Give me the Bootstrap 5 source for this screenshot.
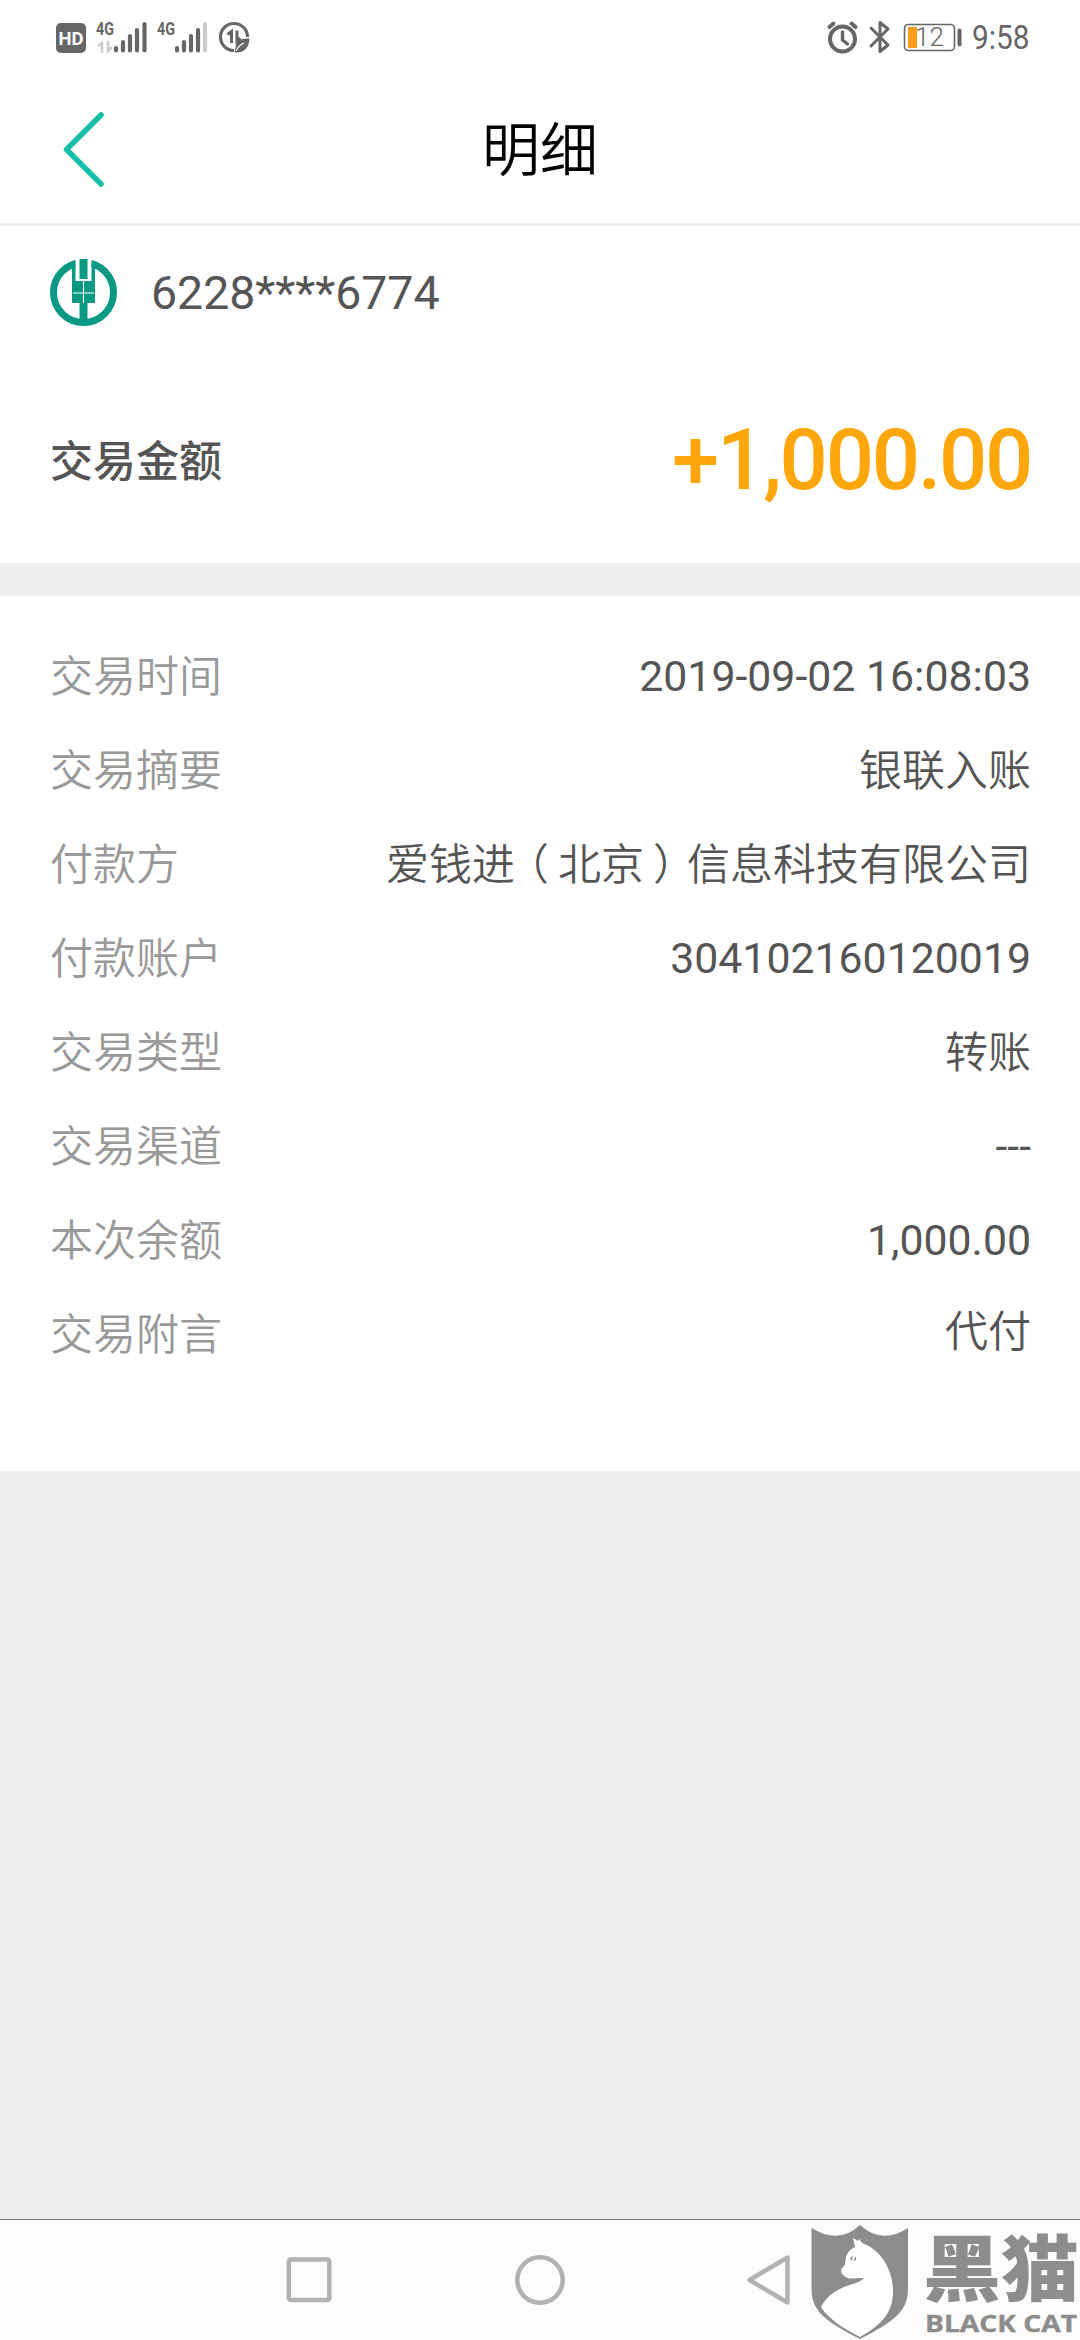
<!DOCTYPE html>
<html lang="zh-CN">

<head>
    <meta charset="UTF-8">
    <meta name="viewport" content="width=device-width, initial-scale=1.0">
    <title>明细</title>
    <link href="https://cdn.jsdelivr.net/npm/bootstrap@5.3.3/dist/css/bootstrap.min.css" rel="stylesheet">
    <style>
        body {
            height: 2340px;
            overflow: hidden;
            background-color: #efefef;
            color: #555;
            font-family: Roboto, "Noto Sans CJK SC", sans-serif;
            font-size: 43px;
            line-height: 1;
        }

        svg {
            display: block;
            flex: none;
        }

        /* 状态栏 */
        .status-bar {
            height: 75px;
            padding: 0 50px 0 55px;
        }

        .clock {
            font-size: 33.5px;
            color: #666;
            transform: scaleX(.89);
            transform-origin: right;
        }

        /* 标题栏 */
        .title-bar {
            height: 151px;
            padding: 0 62px;
            border-bottom: 3px solid #efefef;
        }

        .title-bar h1 {
            padding-top: 3px;
            font-size: 58px;
            font-weight: 350;
            line-height: 1;
            color: #000;
        }

        .side-box {
            width: 120px;
        }

        /* 卡号和金额 */
        .summary {
            height: 337px;
            padding: 33px 49px 0 50px;
        }

        .card-no {
            font-size: 46.4px;
            padding-left: 34px;
            padding-top: 2px;
        }

        .amount-row {
            height: 86px;
            margin-top: 91px;
        }

        .amount-label {
            font-weight: 500;
            padding-top: 5px;
        }

        .amount {
            font-size: 85px;
            font-weight: 500;
            letter-spacing: -2.3px;
            color: #ffa70a;
        }

        /* 明细列表 */
        .detail {
            margin-top: 33px;
            height: 875px;
            padding: 33px 49px 0 50px;
        }

        .detail-row {
            height: 94px;
        }

        .detail-row dt {
            padding-top: 3px;
            font-weight: 350;
            color: #999;
        }

        .detail-row dd {
            font-size: 42.8px;
        }

        .detail-row .zh {
            padding-top: 3px;
            font-size: 43px;
            font-weight: 350;
        }

        .detail-row:last-child .zh {
            padding-top: 0;
            padding-bottom: 3px;
        }

        /* 括号居中 */
        .paren-l,
        .paren-r {
            font-feature-settings: "halt";
            margin: 0 9px 0 12.5px;
        }

        .paren-r {
            margin: 0 12.5px 0 9px;
        }

        /* 导航栏 */
        .nav-keys {
            height: 121px;
            background-color: #fcfcfc;
            border-top: 1px solid #777;
            padding-left: 286px;
        }

        .nav-keys svg {
            overflow: visible;
        }
    </style>
</head>

<body class="d-flex flex-column">
    <header class="bg-white">
        <div class="status-bar d-flex align-items-center justify-content-between">
            <svg width="200" height="75" viewBox="55 0 200 75" fill="#666">
                <rect x="56" y="23" width="30" height="30" rx="5" />
                <text x="71" y="45" font-size="19" font-weight="700" text-anchor="middle" fill="#fff" textLength="25" lengthAdjust="spacingAndGlyphs">HD</text>
                <text x="96" y="35" font-size="18" font-weight="700" textLength="18" lengthAdjust="spacingAndGlyphs">4G</text>
                <path d="M98 46l4-3v10M108 41v10l4-4" fill="none" stroke="#ccc" stroke-width="2.5" />
                <path d="M116 48v2.500M123 42v8.500M130 36v14.500M137 30v20.500M144.500 24v26.500" stroke="#666" stroke-width="4.200" stroke-linecap="round" />
                <text x="157" y="35" font-size="18" font-weight="700" textLength="18" lengthAdjust="spacingAndGlyphs">4G</text>
                <path d="M177 48v2.500M184 42v8.500M191 36v14.500M198 30v20.500" stroke="#666" stroke-width="4.200" stroke-linecap="round" />
                <path d="M205 24v26.500" stroke="#ccc" stroke-width="4.200" stroke-linecap="round" />
                <path d="M247.500 37A13.500 13.500 0 1 0 234 50.500" fill="none" stroke="#666" stroke-width="3.200" />
                <path d="M227.500 34.500l4-3v11.500M237 30.500v11l3.500-3.500" fill="none" stroke="#666" stroke-width="3" />
                <path d="M249.500 38.500q-13-1-14 9l-1 5q14 1 15-14z" />
                <path d="M236 51q3-6 8-8" fill="none" stroke="#fff" stroke-width="1.200" />
            </svg>
            <div class="d-flex align-items-center">
                <svg width="140" height="75" viewBox="823 0 140 75" fill="none" stroke="#666" stroke-width="4">
                    <circle cx="840.500" cy="39" r="12.500" />
                    <path d="M840.500 32v8l5 4" stroke-width="3.400" stroke-linecap="round" />
                    <path d="M827.500 27l4-3.500M853.500 27l-4-3.500" stroke-linecap="round" />
                    <path d="M869 28l17 17-8 6.500V22.500l8 6.500-17 17" stroke-width="3" stroke-linejoin="round" stroke-linecap="round" />
                    <rect x="902.500" y="24.500" width="50" height="26" rx="4" stroke-width="1.600" />
                    <path d="M906 27h9v21h-9z" fill="#ff9b1a" stroke="none" />
                    <text x="913" y="46" font-size="26" font-weight="300" fill="#666" stroke="none">12</text>
                    <path d="M957.500 30.500v14" stroke-linecap="round" />
                </svg>
                <span class="clock">9:58</span>
            </div>
        </div>
        <div class="title-bar d-flex align-items-center justify-content-between">
            <div class="side-box">
                <svg width="45" height="76" viewBox="0 0 45 76" fill="none" stroke="#16bfa7" stroke-width="5.500" stroke-linecap="round" stroke-linejoin="round">
                    <path d="M39 4L4.500 38.500 39 73" />
                </svg>
            </div>
            <h1 class="m-0">明细</h1>
            <div class="side-box"></div>
        </div>
    </header>

    <main class="flex-grow-1">
        <section class="summary bg-white">
            <div class="d-flex align-items-center">
                <svg width="67" height="67" viewBox="0 0 67 67">
                    <circle cx="33.500" cy="33.500" r="30" fill="none" stroke="#0a9a84" stroke-width="7" />
                    <path d="M25.500 0h16v20h-16z" fill="#fff" />
                    <path d="M29.500 0h8v20h-8zM22 4h3.500v18h16V4H45v40h-7.500v19h-8V44H22z" fill="#0a9a84" />
                    <path d="M33.500 22v22M23 34h21" stroke="#fff" stroke-width="1" />
                </svg>
                <span class="card-no">6228****6774</span>
            </div>
            <div class="amount-row d-flex align-items-center justify-content-between">
                <span class="amount-label">交易金额</span>
                <span class="amount">+1,000.00</span>
            </div>
        </section>

        <dl class="detail bg-white mb-0">
            <div class="detail-row d-flex align-items-center justify-content-between">
                <dt>交易时间</dt>
                <dd class="m-0">2019-09-02 16:08:03</dd>
            </div>
            <div class="detail-row d-flex align-items-center justify-content-between">
                <dt>交易摘要</dt>
                <dd class="zh m-0">银联入账</dd>
            </div>
            <div class="detail-row d-flex align-items-center justify-content-between">
                <dt>付款方</dt>
                <dd class="zh m-0">爱钱进<span class="paren-l">（</span>北京<span class="paren-r">）</span>信息科技有限公司</dd>
            </div>
            <div class="detail-row d-flex align-items-center justify-content-between">
                <dt>付款账户</dt>
                <dd class="m-0">304102160120019</dd>
            </div>
            <div class="detail-row d-flex align-items-center justify-content-between">
                <dt>交易类型</dt>
                <dd class="zh m-0">转账</dd>
            </div>
            <div class="detail-row d-flex align-items-center justify-content-between">
                <dt>交易渠道</dt>
                <dd class="m-0">---</dd>
            </div>
            <div class="detail-row d-flex align-items-center justify-content-between">
                <dt>本次余额</dt>
                <dd class="m-0">1,000.00</dd>
            </div>
            <div class="detail-row d-flex align-items-center justify-content-between">
                <dt>交易附言</dt>
                <dd class="zh m-0">代付</dd>
            </div>
        </dl>
    </main>

    <footer class="nav-keys d-flex">
        <svg width="794" height="120" viewBox="286 2220 794 120">
            <g fill="none" stroke="#b1b1b1" stroke-width="4.500" stroke-linejoin="round">
                <rect x="288.800" y="2259.500" width="40.500" height="40.500" rx="2" />
                <circle cx="540" cy="2280" r="22.700" />
                <path d="M787.500 2257.500v45L749.500 2280z" />
            </g>
            <g fill="#8e8c8d">
                <path d="M811.500 2228q27 17 48.500-3 22 20 48 3v61c0 23-15 33-48 50-33-17-48.500-27-48.500-50z" />
                <path fill="#fff" d="M855 2247l-2-9 5 3 1-2 3 4c20 7 31 28 31 48 0 21-10 33-33 46-15-8-31-17-39-30 7-14 21-20 32-23q9-3 11-6l-15 .5q-8-2.500-8-9l4-5 1-8q3-7 9-9.500z" />
                <path d="M850 2258l3-2-1 5zM853.500 2261q1-3 2.500-5 1 5-2.500 5z" />
                <text x="923" y="2295" font-size="72" font-weight="900" font-family="Noto Sans CJK SC" textLength="156" lengthAdjust="spacingAndGlyphs">黑猫</text>
                <text x="925" y="2332" font-size="22.500" font-weight="700" font-family="Open Sans" stroke="#8e8c8d" stroke-width=".4" textLength="152" lengthAdjust="spacingAndGlyphs">BLACK CAT</text>
            </g>
        </svg>
    </footer>

    <script src="https://cdn.jsdelivr.net/npm/bootstrap@5.3.3/dist/js/bootstrap.bundle.min.js"></script>
</body>

</html>
